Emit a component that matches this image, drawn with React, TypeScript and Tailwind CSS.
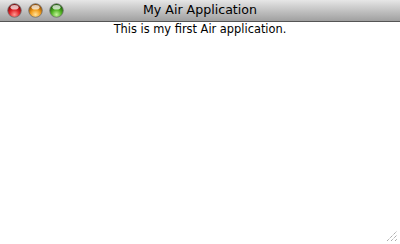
function Light({ id, light, mid, dark }: { id: string; light: string; mid: string; dark: string }) {
  return (
    <svg width="15" height="15" viewBox="0 0 15 15">
      <defs>
        <radialGradient id={id} cx="50%" cy="80%" r="65%">
          <stop offset="0%" stopColor={light} />
          <stop offset="55%" stopColor={mid} />
          <stop offset="100%" stopColor={dark} />
        </radialGradient>
      </defs>
      <circle cx="7.5" cy="7.5" r="6.8" fill={`url(#${id})`} stroke="#707070" strokeWidth="0.8" />
      <ellipse cx="7.5" cy="4.2" rx="4" ry="2.3" fill="white" opacity="0.7" />
    </svg>
  );
}

export default function App() {
  return (
    <div className="relative flex h-[244px] w-[400px] flex-col bg-white" style={{ fontFamily: '"DejaVu Sans", "Liberation Sans", sans-serif' }}>
      <header className="relative flex h-[22px] items-center justify-center border-b border-[#555555] bg-gradient-to-b from-[#e6e6e6] to-[#a0a0a0]">
        <div className="absolute left-[7px] top-[3px] flex gap-[6px]">
          <Light id="red" light="#ff9a92" mid="#e3262a" dark="#8a0608" />
          <Light id="amber" light="#ffe29a" mid="#f29e1c" dark="#9a5200" />
          <Light id="green" light="#c4f39a" mid="#52b424" dark="#1f6608" />
        </div>
        <h1 className="text-[12.6px] leading-none text-black">My Air Application</h1>
      </header>
      <p className="text-center text-[11.4px] leading-[14px] text-black">This is my first Air application.</p>
      <svg className="absolute bottom-[2px] right-[2px]" width="12" height="12" viewBox="0 0 12 12">
        <g stroke="#8a8a8a" strokeWidth="1" strokeDasharray="1 1">
          <line x1="1" y1="11" x2="11" y2="1" />
          <line x1="5" y1="11" x2="11" y2="5" />
          <line x1="9" y1="11" x2="11" y2="9" />
        </g>
      </svg>
    </div>
  );
}
